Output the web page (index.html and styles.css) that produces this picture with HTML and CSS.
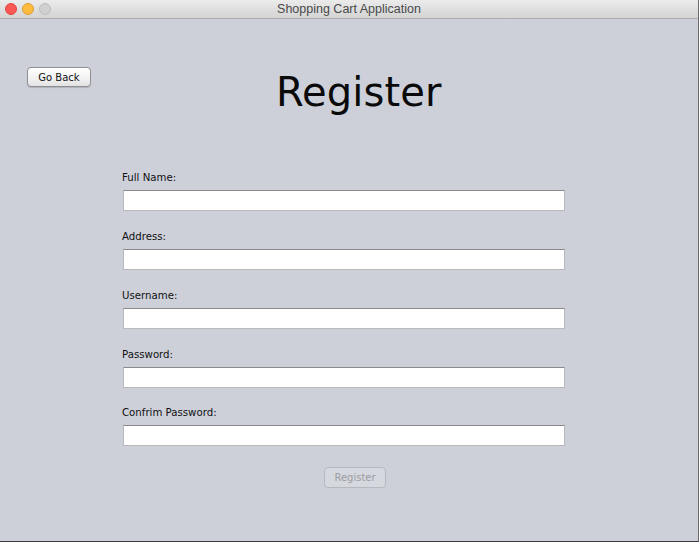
FILE: index.html
```html
<!DOCTYPE html>
<html>
<head>
<meta charset="utf-8">
<link rel="stylesheet" href="styles.css">
</head>
<body>
<div class="window">
  <div class="titlebar">
    <div class="lights">
      <span class="light red"></span>
      <span class="light yellow"></span>
      <span class="light gray"></span>
    </div>
    <div class="title">Shopping Cart Application</div>
  </div>
  <div class="content">
    <div class="top">
      <button class="btn back">Go Back</button>
      <h1 class="heading">Register</h1>
    </div>
    <form class="form">
      <div class="field">
        <label>Full Name:</label>
        <input type="text">
      </div>
      <div class="field">
        <label>Address:</label>
        <input type="text">
      </div>
      <div class="field">
        <label>Username:</label>
        <input type="text">
      </div>
      <div class="field">
        <label>Password:</label>
        <input type="password">
      </div>
      <div class="field last">
        <label>Confrim Password:</label>
        <input type="password">
      </div>
      <div class="actions">
        <button type="button" class="btn submit" disabled>Register</button>
      </div>
    </form>
  </div>
</div>
</body>
</html>
```

FILE: styles.css
```css
html, body {
  margin: 0;
  padding: 0;
  background: #ffffff;
}
body {
  font-family: "DejaVu Sans", sans-serif;
}
.window {
  width: 698px;
  height: 541px;
  border-right: 1px solid #6a6a6e;
  border-bottom: 1px solid #3a3a3e;
  background: #cdd0d9;
  display: flex;
  flex-direction: column;
}
.titlebar {
  height: 18px;
  border-bottom: 1px solid #aeaeae;
  background: linear-gradient(#ebebeb, #d4d4d4);
  position: relative;
  display: flex;
  align-items: center;
  justify-content: center;
}
.lights {
  position: absolute;
  left: 5px;
  top: 3px;
  display: flex;
  gap: 5px;
}
.light {
  width: 12px;
  height: 12px;
  border-radius: 50%;
  box-sizing: border-box;
}
.red { background: #fc5753; border: 1px solid #df4744; }
.yellow { background: #fdbc40; border: 1px solid #de9f34; }
.gray { background: #d0d0d0; border: 1px solid #bdbdbd; }
.title {
  font-family: "Liberation Sans", sans-serif;
  font-size: 12.5px;
  color: #4a4a4a;
}
.content {
  flex: 1;
}
.top {
  display: flex;
  align-items: flex-start;
  padding-left: 27px;
}
.btn {
  font-family: "DejaVu Sans", sans-serif;
  font-size: 10px;
  border-radius: 4px;
  padding: 0;
  box-sizing: border-box;
}
.back {
  margin-top: 48px;
  width: 64px;
  height: 20px;
  color: #111;
  background: linear-gradient(#ffffff, #f1f1f1 60%, #e2e2e2);
  border: 1px solid #8f8f94;
  box-shadow: 0 1px 1px rgba(0,0,0,0.15);
}
.heading {
  margin: 50px 0 0 185px;
  font-size: 40px;
  font-weight: normal;
  line-height: 46px;
  color: #0a0a0a;
  letter-spacing: 0.1px;
}
.form {
  margin: 56px 0 0 122px;
  width: 443px;
  display: flex;
  flex-direction: column;
}
.field {
  display: flex;
  flex-direction: column;
  margin-bottom: 19px;
}
.field.last {
  margin-top: -1px;
}
.field label {
  font-size: 10.2px;
  line-height: 13px;
  color: #111;
  margin-bottom: 6px;
}
.field input {
  margin: 0 0 0 1px;
  width: 442px;
  height: 21px;
  box-sizing: border-box;
  background: #ffffff;
  border: 1px solid #b9b9bc;
  border-top-color: #8a8a8d;
  border-radius: 0;
  padding: 0 3px;
  outline: none;
}
.actions {
  display: flex;
  justify-content: flex-start;
  padding-left: 202px;
  margin-top: 2px;
}
.submit {
  width: 62px;
  height: 21px;
  color: #9b9ca1;
  background: #d6d8df;
  border: 1px solid #b6b8be;
}
```
